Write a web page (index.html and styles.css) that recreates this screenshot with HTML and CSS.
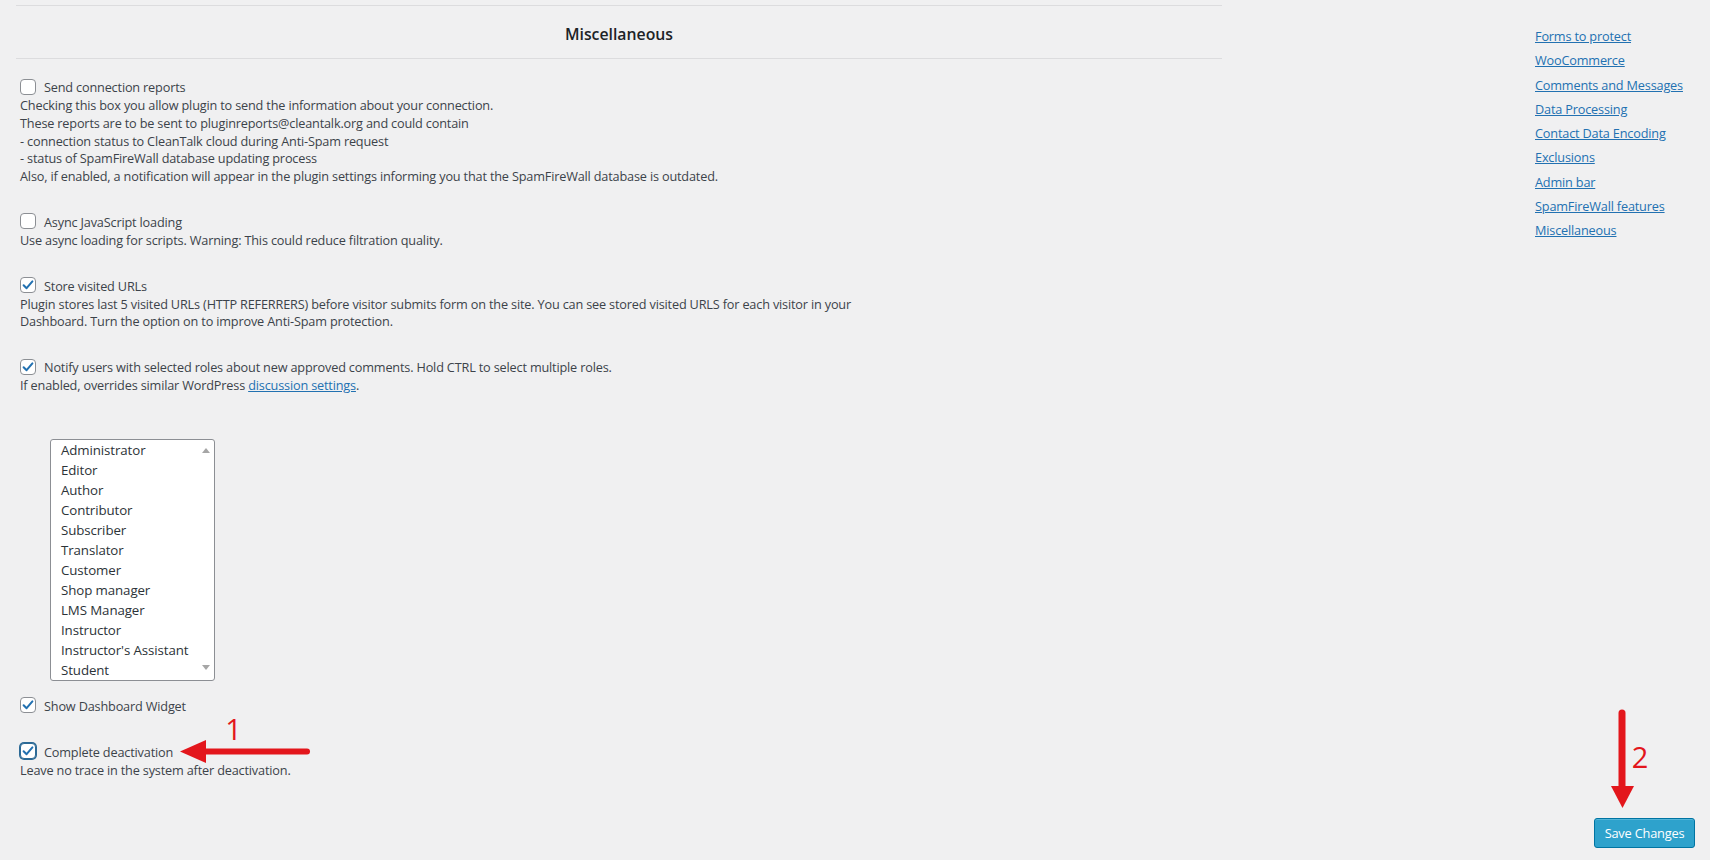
FILE: index.html
```html
<!DOCTYPE html>
<html lang="en">
<head>
<meta charset="utf-8">
<title>Miscellaneous settings</title>
<link rel="stylesheet" href="styles.css">
</head>
<body>
<div class="page">
  <div class="main">
    <div class="rule rule-top"></div>
    <h2 class="title">Miscellaneous</h2>
    <div class="rule"></div>
    <div class="options">
      <div class="option">
        <label class="row"><span class="cb"></span><span>Send connection reports</span></label>
        <div class="desc">Checking this box you allow plugin to send the information about your connection.<br>These reports are to be sent to pluginreports@cleantalk.org and could contain<br>- connection status to CleanTalk cloud during Anti-Spam request<br>- status of SpamFireWall database updating process<br>Also, if enabled, a notification will appear in the plugin settings informing you that the SpamFireWall database is outdated.</div>
      </div>
      <div class="option">
        <label class="row"><span class="cb"></span><span>Async JavaScript loading</span></label>
        <div class="desc">Use async loading for scripts. Warning: This could reduce filtration quality.</div>
      </div>
      <div class="option">
        <label class="row"><span class="cb"><svg viewBox="0 0 16 16" class="tick"><path d="M3.6 8.2 L6.6 11.2 L12.4 4.4"/></svg></span><span>Store visited URLs</span></label>
        <div class="desc">Plugin stores last 5 visited URLs (HTTP REFERRERS) before visitor submits form on the site. You can see stored visited URLS for each visitor in your<br>Dashboard. Turn the option on to improve Anti-Spam protection.</div>
      </div>
      <div class="option">
        <label class="row"><span class="cb"><svg viewBox="0 0 16 16" class="tick"><path d="M3.6 8.2 L6.6 11.2 L12.4 4.4"/></svg></span><span>Notify users with selected roles about new approved comments. Hold CTRL to select multiple roles.</span></label>
        <div class="desc">If enabled, overrides similar WordPress <a href="#" class="link">discussion settings</a>.</div>
      </div>
      <div class="listbox">
        <ul class="roles">
          <li>Administrator</li>
          <li>Editor</li>
          <li>Author</li>
          <li>Contributor</li>
          <li>Subscriber</li>
          <li>Translator</li>
          <li>Customer</li>
          <li>Shop manager</li>
          <li>LMS Manager</li>
          <li>Instructor</li>
          <li>Instructor's Assistant</li>
          <li>Student</li>
        </ul>
        <div class="scroll"><span class="arr-up"></span><span class="arr-down"></span></div>
      </div>
      <div class="option">
        <label class="row"><span class="cb"><svg viewBox="0 0 16 16" class="tick"><path d="M3.6 8.2 L6.6 11.2 L12.4 4.4"/></svg></span><span>Show Dashboard Widget</span></label>
      </div>
      <div class="option">
        <label class="row"><span class="cb cb-focus"><svg viewBox="0 0 16 16" class="tick"><path d="M3.6 8.2 L6.6 11.2 L12.4 4.4"/></svg></span><span>Complete deactivation</span></label>
        <div class="desc">Leave no trace in the system after deactivation.</div>
      </div>
    </div>
  </div>
  <aside class="side">
    <nav class="toc">
      <a href="#">Forms to protect</a>
      <a href="#">WooCommerce</a>
      <a href="#">Comments and Messages</a>
      <a href="#">Data Processing</a>
      <a href="#">Contact Data Encoding</a>
      <a href="#">Exclusions</a>
      <a href="#">Admin bar</a>
      <a href="#">SpamFireWall features</a>
      <a href="#">Miscellaneous</a>
    </nav>
    <button class="btn" type="button">Save Changes</button>
  </aside>
  <svg class="notes" viewBox="0 0 1710 860" width="1710" height="860">
    <line x1="307" y1="751.5" x2="200" y2="751.5" class="shaft"/>
    <polygon points="180,751.5 206,740 206,763" class="head"/>
    <text x="233.5" y="740" class="num">1</text>
    <line x1="1622" y1="713" x2="1622" y2="790" class="shaft shaft-v"/>
    <polygon points="1611,786 1634,786 1622.5,808" class="head"/>
    <text x="1640" y="768" class="num">2</text>
  </svg>
</div>
</body>
</html>
```

FILE: styles.css
```css
* { box-sizing: border-box; }
html, body { margin: 0; height: 860px; overflow: hidden; }
body {
  background: #f0f0f1;
  font-family: "Open Sans", "Noto Sans", sans-serif;
  font-size: 12.7px;
  letter-spacing: -0.17px;
  color: #3c434a;
}
.page {
  position: relative;
  display: flex;
  height: 860px;
  padding-left: 16px;
}
.main { width: 1206px; flex: none; }
.rule { height: 1px; background: #dcdcde; }
.rule-top { margin-top: 5px; }
.title {
  margin: 0;
  padding: 17px 0 13px;
  line-height: 22px;
  text-align: center;
  font-size: 15.8px;
  font-weight: 600;
  letter-spacing: 0;
  color: #1d2327;
}
.options { padding: 19px 0 0 4px; }
.option + .option { margin-top: 27px; }
.row {
  display: flex;
  align-items: center;
  gap: 8px;
  height: 19px;
  line-height: 19px;
}
.cb {
  width: 16px;
  height: 16px;
  flex: none;
  border: 1px solid #8c8f94;
  border-radius: 4px;
  background: #fff;
  display: flex;
  align-items: center;
  justify-content: center;
  margin-top: -2px;
}
.cb-focus {
  border-color: #2c6a96;
  box-shadow: 0 0 0 1px #2c6a96;
}
.tick { width: 16px; height: 16px; flex: none; }
.tick path { fill: none; stroke: #2271b1; stroke-width: 2; stroke-linecap: round; stroke-linejoin: round; }
.desc { line-height: 17.75px; }
.link { color: #2271b1; text-decoration: underline; }

.listbox {
  margin: 44px 0 0 30px;
  width: 165px;
  height: 242px;
  display: flex;
  border: 1px solid #8c8f94;
  border-radius: 3px;
  background: #fff;
  color: #2c3338;
  font-size: 13.3px;
  letter-spacing: -0.1px;
}
.listbox + .option { margin-top: 16px; }
.roles {
  list-style: none;
  margin: 0;
  padding: 0 0 0 10px;
  flex: 1;
}
.roles li { height: 20px; line-height: 20px; white-space: nowrap; }
.scroll {
  width: 16px;
  flex: none;
  display: flex;
  flex-direction: column;
  justify-content: space-between;
  align-items: center;
  padding: 8px 0 10px;
}
.arr-up {
  width: 0; height: 0;
  border-left: 4.5px solid transparent;
  border-right: 4.5px solid transparent;
  border-bottom: 5px solid #a6a6a6;
}
.arr-down {
  width: 0; height: 0;
  border-left: 4.5px solid transparent;
  border-right: 4.5px solid transparent;
  border-top: 5px solid #a6a6a6;
}

.side {
  flex: 1;
  margin-left: 313px;
  display: flex;
  flex-direction: column;
  padding: 24px 15px 12px 0;
}
.toc a {
  display: block;
  width: max-content;
  line-height: 24.25px;
  color: #2271b1;
  text-decoration: underline;
}
.btn {
  margin-top: auto;
  align-self: flex-end;
  width: 101px;
  height: 30px;
  padding: 0;
  background: #2ea2cc;
  border: 1px solid #0074a2;
  border-radius: 3px;
  color: #fff;
  font-family: "Open Sans", "Noto Sans", sans-serif;
  font-size: 12.8px;
  letter-spacing: -0.2px;
  box-shadow: inset 0 1px 0 rgba(120, 200, 230, 0.5);
}

.notes {
  position: absolute;
  left: 0;
  top: 0;
  pointer-events: none;
}
.shaft { stroke: #e3161c; stroke-width: 6; stroke-linecap: round; }
.shaft-v { stroke-width: 7; }
.head { fill: #e3161c; }
.num {
  fill: #e3161c;
  font-family: "Open Sans", sans-serif;
  font-size: 29px;
  letter-spacing: 0;
  text-anchor: middle;
}
```
